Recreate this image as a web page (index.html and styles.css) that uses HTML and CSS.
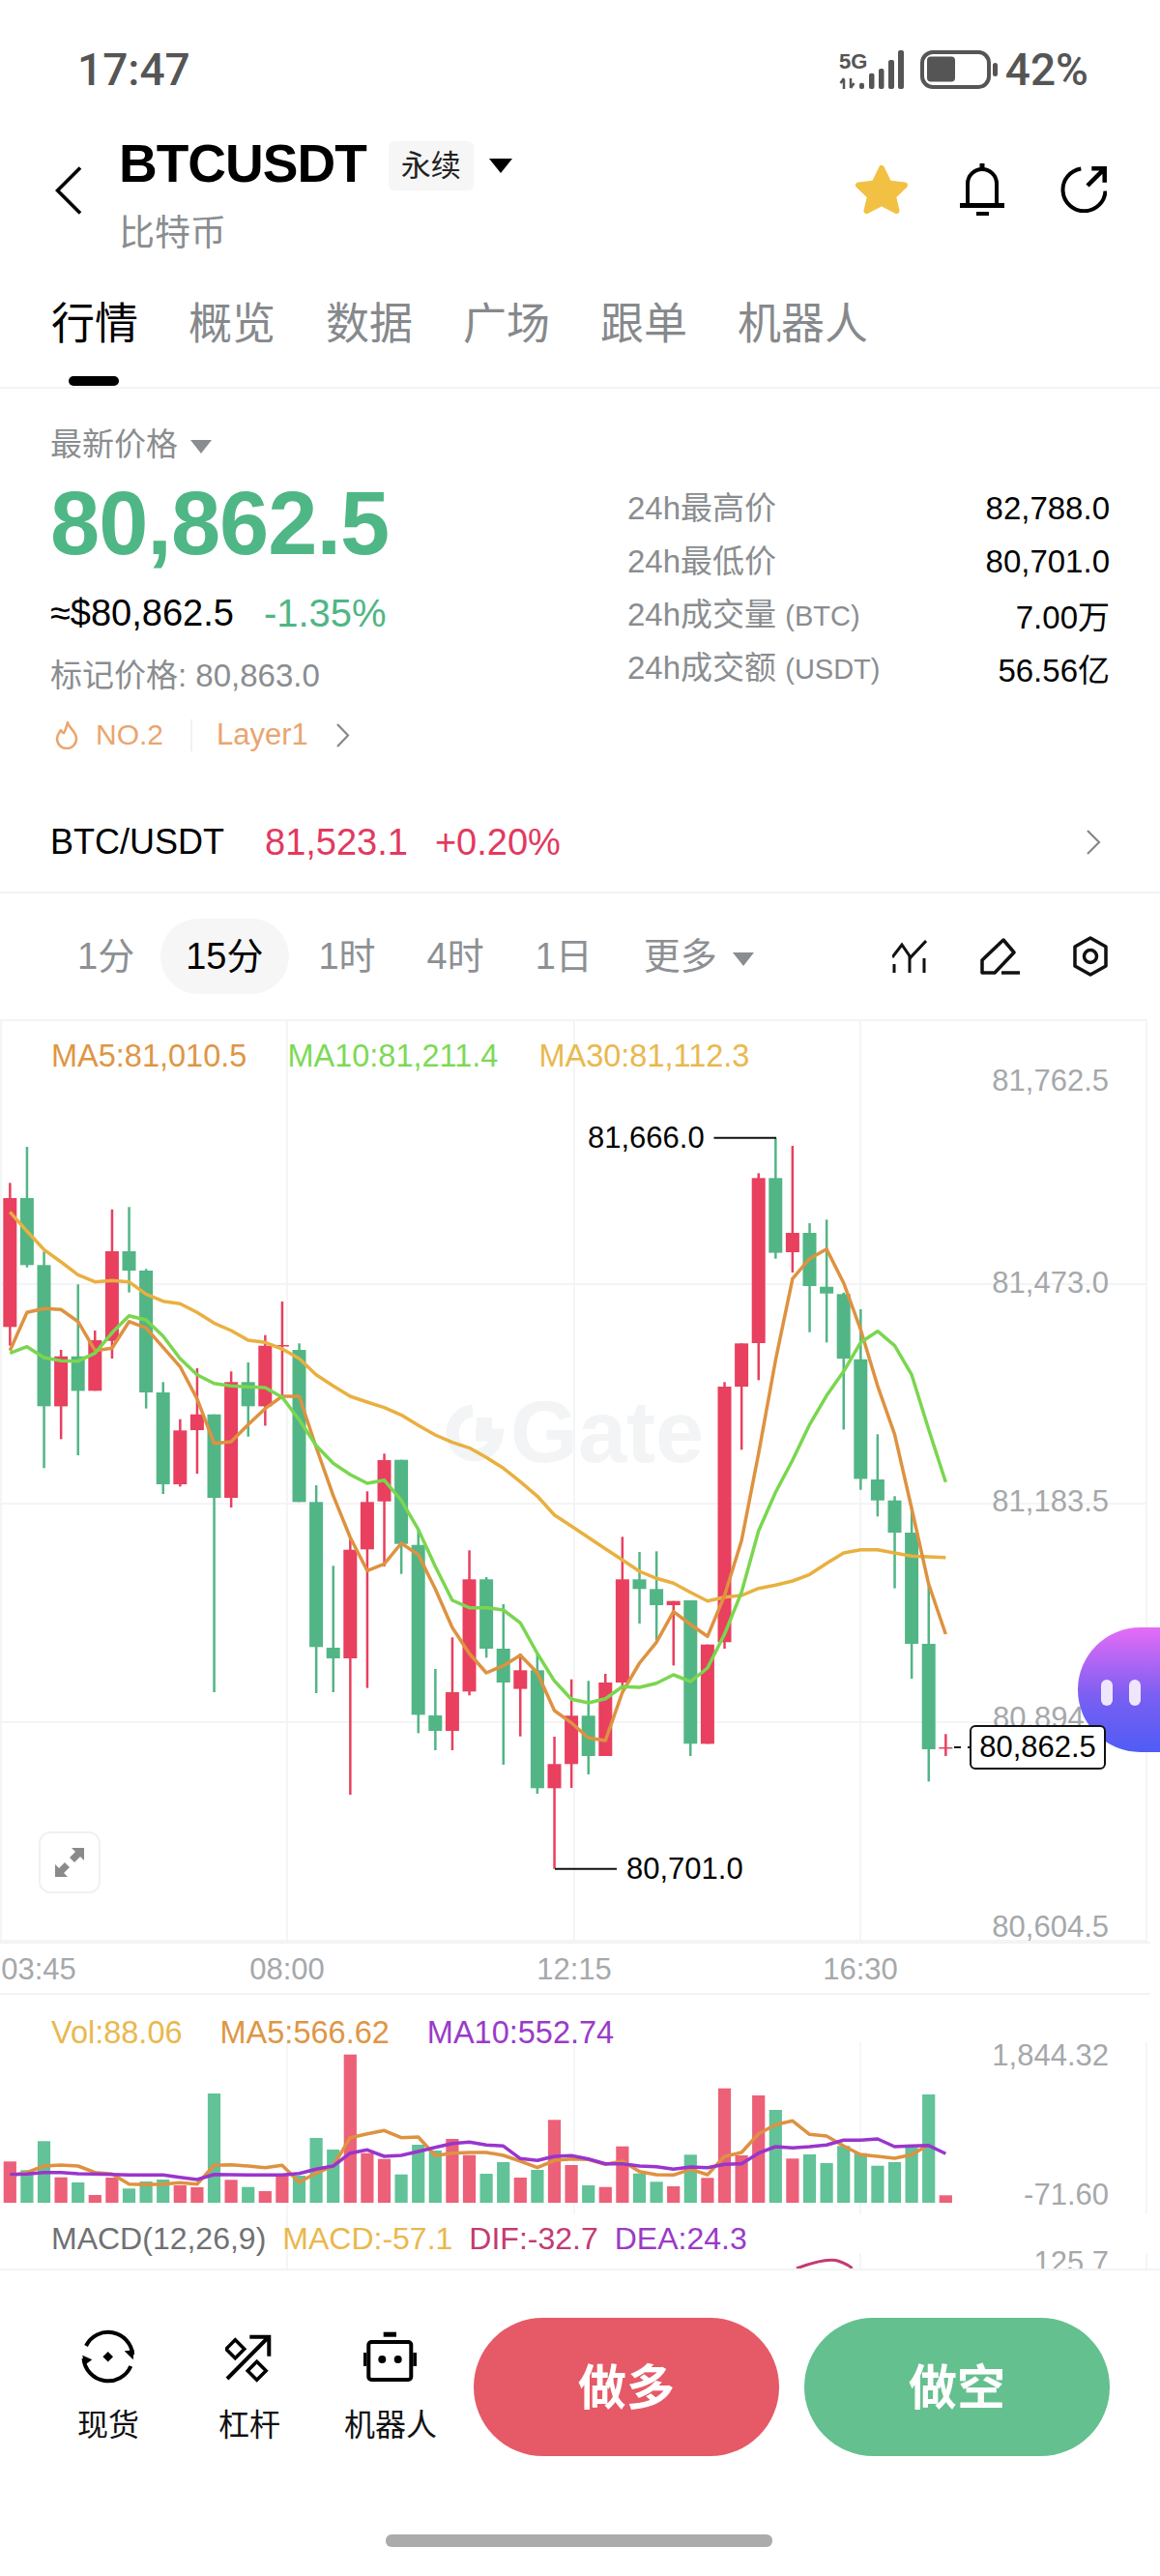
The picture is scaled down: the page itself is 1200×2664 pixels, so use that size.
FILE: index.html
```html
<!DOCTYPE html>
<html lang="zh-CN">
<head>
    <meta charset="UTF-8">
    <meta name="viewport" content="width=device-width, initial-scale=1.0">
    <title>BTCUSDT</title>
    <link rel="stylesheet" href="styles.css">
</head>
<body>
    <div class="status-bar">
        <span class="clock">17:47</span>
        <div class="status-right">
            <svg class="signal" width="67" height="40" viewBox="0 0 67 40">
                <text x="0" y="19" class="signal-text">5G</text>
                <path d="M5 40V30M1.500 34L5 29M12 39V29M12 39l3.500-5" fill="none" stroke="#555" stroke-width="2.500"/>
                <g fill="#555">
                    <rect x="21" y="33.700" width="5" height="6.300" rx="2"/>
                    <rect x="31" y="23.700" width="5.500" height="16.300" rx="2"/>
                    <rect x="41" y="19" width="5.500" height="21" rx="2"/>
                    <rect x="51" y="10" width="6" height="30" rx="2"/>
                    <rect x="61" y="0" width="6" height="40" rx="2"/>
                </g>
            </svg>
            <svg class="battery" width="80" height="40" viewBox="0 0 80 40">
                <rect x="2" y="2" width="69" height="36" rx="11" fill="none" stroke="#555" stroke-width="4"/>
                <rect x="7" y="6.500" width="29" height="26" rx="4" fill="#555"/>
                <rect x="75" y="13" width="5" height="14" rx="2.500" fill="#555"/>
            </svg>
            <span class="percent">42%</span>
        </div>
    </div>

    <div class="header">
        <svg class="back" width="28" height="50" viewBox="0 0 28 50">
            <path d="M26 1.500L2.500 25L26 48.500" fill="none" stroke="#000" stroke-width="3.600"/>
        </svg>
        <div class="title-block">
            <div class="title-row">
                <h1>BTCUSDT</h1>
                <span class="badge">永续</span>
                <span class="caret caret-black"></span>
            </div>
            <p class="subtitle">比特币</p>
        </div>
        <div class="header-icons">
            <svg width="56" height="52" viewBox="0 0 56 52">
                <polygon points="28,4 35.500,19.500 52,21.500 40,33 43.500,48 28,40 12.500,48 16,33 4,21.500 20.500,19.500" fill="#f2c144" stroke="#f2c144" stroke-width="6" stroke-linejoin="round"/>
            </svg>
            <svg width="46" height="54" viewBox="0 0 46 54">
                <path d="M8 43V21a15 15 0 0 1 30 0v22" fill="none" stroke="#000" stroke-width="4"/>
                <path d="M23 0v6" stroke="#000" stroke-width="5"/>
                <path d="M0 43.500h46" stroke="#000" stroke-width="5"/>
                <rect x="17" y="50" width="13" height="4" fill="#000"/>
            </svg>
            <svg class="share-icon" width="48" height="48" viewBox="0 0 48 48">
                <path d="M21.300 2.500A22 22 0 1 0 46.500 25.500" fill="none" stroke="#000" stroke-width="4"/>
                <path d="M28 20L44.700 3.300M32.300 2.300H45.700V16.700" fill="none" stroke="#000" stroke-width="4.500"/>
            </svg>
        </div>
    </div>

    <div class="tabs">
        <span class="tab active">行情</span>
        <span class="tab">概览</span>
        <span class="tab">数据</span>
        <span class="tab">广场</span>
        <span class="tab">跟单</span>
        <span class="tab">机器人</span>
    </div>

    <div class="price-section">
        <div class="price-left">
            <div class="price-label">最新价格 <span class="caret caret-gray"></span></div>
            <div class="last-price">80,862.5</div>
            <div class="fiat-row">
                <span class="fiat">≈$80,862.5</span>
                <span class="change">-1.35%</span>
            </div>
            <div class="mark-price">标记价格: 80,863.0</div>
            <div class="tag-row">
                <svg width="24" height="30" viewBox="0 0 24 30">
                    <path d="M13 2c1 6 9 9 9 17a10 10 0 0 1-20 0c0-4 2-6 4-9 1 2 2 3 3 3 2-3 3-7 4-11z" fill="none" stroke="#e9a56f" stroke-width="2.500" stroke-linejoin="round"/>
                </svg>
                <span class="tag-rank">NO.2</span>
                <span class="tag-sep"></span>
                <span class="tag-name">Layer1</span>
                <svg class="tag-arrow" width="15" height="25" viewBox="0 0 15 25">
                    <path d="M2 1l11 11.500L2 24" fill="none" stroke="#888" stroke-width="2.200"/>
                </svg>
            </div>
        </div>
        <div class="stats">
            <div class="stat"><span class="stat-label">24h最高价</span><span>82,788.0</span></div>
            <div class="stat"><span class="stat-label">24h最低价</span><span>80,701.0</span></div>
            <div class="stat"><span class="stat-label">24h成交量 <small>(BTC)</small></span><span>7.00万</span></div>
            <div class="stat"><span class="stat-label">24h成交额 <small>(USDT)</small></span><span>56.56亿</span></div>
        </div>
    </div>

    <div class="spot-row">
        <span class="spot-name">BTC/USDT</span>
        <span class="spot-price">81,523.1</span>
        <span class="spot-price">+0.20%</span>
        <svg class="spot-arrow" width="16" height="26" viewBox="0 0 16 26">
            <path d="M2 1l12 12L2 25" fill="none" stroke="#888" stroke-width="2.200"/>
        </svg>
    </div>

    <div class="interval-row">
        <span class="interval">1分</span>
        <span class="interval active">15分</span>
        <span class="interval">1时</span>
        <span class="interval">4时</span>
        <span class="interval">1日</span>
        <span class="interval">更多 <span class="caret caret-gray"></span></span>
        <div class="interval-icons">
            <svg width="36" height="34" viewBox="0 0 36 34">
                <path d="M0 18L10 5l9 13L35 1" fill="none" stroke="#111" stroke-width="3"/>
                <path d="M2 25v9M18 17v17M33 19v15" stroke="#111" stroke-width="3"/>
            </svg>
            <svg width="41" height="38" viewBox="0 0 41 38">
                <path d="M24 2l11 13-20 21H2V23z" fill="none" stroke="#111" stroke-width="3.500" stroke-linejoin="round"/>
                <path d="M22 36h19" stroke="#111" stroke-width="3.500"/>
            </svg>
            <svg width="36" height="42" viewBox="0 0 36 42">
                <path d="M18 2l16 9v20l-16 9-16-9V11z" fill="none" stroke="#111" stroke-width="3.500" stroke-linejoin="round"/>
                <circle cx="18" cy="21" r="6.500" fill="none" stroke="#111" stroke-width="3.500"/>
            </svg>
        </div>
    </div>

    <div class="chart-pane kline-pane">
        <div class="watermark">
            <svg width="64" height="60" viewBox="0 0 64 60">
                <path d="M30 7A23 23 0 1 0 55 32H33" fill="none" stroke="#f2f4f5" stroke-width="13"/>
                <rect x="34" y="14" width="16" height="16" fill="#f2f4f5"/>
            </svg>
            <span>Gate</span>
        </div>
        <svg id="klineChart" class="chart-svg" width="1200" height="954"></svg>
        <div class="legend">
            <span class="c-ma5">MA5:81,010.5</span>
            <span class="c-ma10">MA10:81,211.4</span>
            <span class="c-ma30">MA30:81,112.3</span>
        </div>
        <span class="axis-label k1">81,762.5</span>
        <span class="axis-label k2">81,473.0</span>
        <span class="axis-label k3">81,183.5</span>
        <span class="axis-label k4">80,894</span>
        <span class="axis-label k5">80,604.5</span>
        <span class="mark mark-high">81,666.0</span>
        <span class="mark mark-low">80,701.0</span>
        <div class="expand-btn">
            <svg width="30" height="30" viewBox="0 0 30 30">
                <path d="M30 0v13l-4-4-6 6-5-5 6-6-4-4zM0 30V17l4 4 6-6 5 5-6 6 4 4z" fill="#8a8a8a"/>
            </svg>
        </div>
        <div class="bot-bubble"><i></i><i></i></div>
        <div class="price-tag">80,862.5</div>
    </div>

    <div class="time-axis">
        <span class="tick t1">03:45</span>
        <span class="tick t2">08:00</span>
        <span class="tick t3">12:15</span>
        <span class="tick t4">16:30</span>
    </div>

    <div class="chart-pane vol-pane">
        <svg id="volChart" class="chart-svg" width="1200" height="227"></svg>
        <div class="legend">
            <span class="c-ma30">Vol:88.06</span>
            <span class="c-ma5">MA5:566.62</span>
            <span class="c-purple">MA10:552.74</span>
        </div>
        <span class="axis-label v1">1,844.32</span>
        <span class="axis-label v2">-71.60</span>
    </div>

    <div class="chart-pane macd-pane">
        <svg class="chart-svg" width="1200" height="56">
            <path d="M297 0V56M890 40V56M1186 40V56" stroke="#f4f5f6" stroke-width="2"/>
            <path d="M824 56Q856 44 868 48.500T881 56" fill="none" stroke="#c43a73" stroke-width="3"/>
        </svg>
        <div class="legend">
            <span class="c-gray">MACD(12,26,9)</span>
            <span class="c-ma30">MACD:-57.1</span>
            <span class="c-dif">DIF:-32.7</span>
            <span class="c-purple">DEA:24.3</span>
        </div>
        <span class="axis-label m1">125.7</span>
    </div>

    <div class="bottom-bar">
        <div class="actions">
            <div class="tool">
                <svg width="56" height="56" viewBox="0 0 56 56">
                    <path d="M5 17A25.500 25.500 0 0 1 53.200 26M51.300 38A25.500 25.500 0 0 1 2.500 30" fill="none" stroke="#000" stroke-width="4"/>
                    <path d="M44.700 22.300L54.700 21.300L53.700 31.300zM1.300 26.700L11.300 31.300L3 37.300z" fill="#000"/>
                    <path d="M27.700 23l5.300 5.300-5.300 5.300-5.300-5.300z" fill="#000"/>
                </svg>
                <span>现货</span>
            </div>
            <div class="tool">
                <svg width="50" height="56" viewBox="0 0 50 56">
                    <path d="M2 51L43.700 9M25.300 7.700H45.300V27.700" fill="none" stroke="#000" stroke-width="4"/>
                    <path d="M10.300 10.800l9.500 9.500-9.500 9.500-9.500-9.500zM32.700 33.200l9.500 9.500-9.500 9.500-9.500-9.500z" fill="none" stroke="#000" stroke-width="3.500"/>
                </svg>
                <span>杠杆</span>
            </div>
            <div class="tool">
                <svg width="56" height="56" viewBox="0 0 56 56">
                    <rect x="20.700" y="2.700" width="13.300" height="5" fill="#000"/>
                    <rect x="5.300" y="13" width="44" height="39" rx="3" fill="none" stroke="#000" stroke-width="4"/>
                    <path d="M0 24h3.300v14H0zM51.300 24H55v14h-3.700z" fill="#000"/>
                    <circle cx="19.300" cy="31" r="4" fill="#000"/>
                    <circle cx="35.700" cy="31" r="4" fill="#000"/>
                </svg>
                <span>机器人</span>
            </div>
        </div>
        <button class="trade-btn long">做多</button>
        <button class="trade-btn short">做空</button>
    </div>
    <div class="home-indicator"></div>

    <script src="chart.js"></script>
</body>
</html>
```

FILE: styles.css
```css
* {
    margin: 0;
    padding: 0;
    box-sizing: border-box;
}

body {
    font-family: 'Liberation Sans', 'Noto Sans CJK SC', sans-serif;
    background: white;
    width: 1200px;
    height: 2664px;
    overflow: hidden;
    color: #000;
}

.caret {
    display: inline-block;
    width: 0;
    height: 0;
    border-left: 11px solid transparent;
    border-right: 11px solid transparent;
}

.caret-black {
    border-top: 15px solid #000;
    border-left-width: 12px;
    border-right-width: 12px;
}

.caret-gray {
    border-top: 14px solid #8a8d90;
    vertical-align: middle;
}

/* status bar */
.status-bar {
    height: 112px;
    padding: 32px 74px 0 80px;
    display: flex;
    justify-content: space-between;
    align-items: center;
    color: #555;
}

.clock,
.percent {
    font-family: Roboto, sans-serif;
    font-size: 46px;
    font-weight: 500;
}

.status-right {
    display: flex;
    align-items: center;
}

.signal {
    margin-right: 17px;
}

.signal-text {
    font-family: 'Liberation Sans', sans-serif;
    font-size: 22px;
    font-weight: bold;
    fill: #555;
}

.battery {
    margin-right: 8px;
}

/* header */
.header {
    height: 168px;
    padding: 0 55px 0 57px;
    display: flex;
    align-items: flex-start;
}

.back {
    margin-top: 60px;
    margin-right: 38px;
}

.title-block {
    padding-top: 34px;
}

.title-row {
    display: flex;
    align-items: center;
    height: 51px;
}

.title-row h1 {
    font-size: 55px;
    font-weight: bold;
    letter-spacing: -1px;
    margin-right: 23px;
    margin-top: -6px;
}

.badge {
    background: #f6f6f6;
    border-radius: 6px;
    width: 88px;
    height: 51px;
    line-height: 51px;
    text-align: center;
    font-size: 31px;
    color: #222;
    margin-right: 16px;
}

.subtitle {
    margin-top: 25px;
    font-size: 37px;
    line-height: 40px;
    color: #8a8d90;
}

.header-icons {
    margin-left: auto;
    margin-top: 57px;
    display: flex;
    align-items: center;
    gap: 53px;
}

.share-icon {
    margin-left: 5px;
}

/* tabs */
.tabs {
    height: 122px;
    padding: 28px 0 0 53px;
    display: flex;
    gap: 52px;
    border-bottom: 2px solid #f2f3f4;
}

.tab {
    position: relative;
    height: 56px;
    font-size: 45px;
    line-height: 56px;
    color: #86898c;
}

.tab.active {
    color: #000;
}

.tab.active::after {
    content: '';
    position: absolute;
    left: 18px;
    top: 81px;
    width: 52px;
    height: 10px;
    background: #000;
    border-radius: 5px;
}

/* price block */
.price-section {
    height: 418px;
    padding: 38px 52px 0;
    display: flex;
}

.price-left {
    flex: 1;
}

.price-label {
    font-size: 33px;
    line-height: 40px;
    color: #8a8d90;
}

.price-label .caret {
    margin-left: 4px;
}

.last-price {
    margin-top: 11px;
    font-size: 92px;
    font-weight: bold;
    line-height: 100px;
    letter-spacing: -1px;
    color: #4fb685;
}

.fiat-row {
    margin-top: 23px;
    line-height: 40px;
    font-size: 38px;
    display: flex;
    gap: 31px;
}

.change {
    font-size: 40px;
    color: #4fb685;
}

.mark-price {
    margin-top: 25px;
    font-size: 33px;
    line-height: 40px;
    color: #8a8d90;
}

.tag-row {
    margin-top: 21px;
    height: 40px;
    display: flex;
    align-items: center;
    color: #e9a56f;
    padding-left: 5px;
}

.tag-rank {
    margin-left: 18px;
    font-size: 30px;
}

.tag-sep {
    width: 2px;
    height: 33px;
    background: #f3f1ef;
    margin: 0 25px 0 28px;
}

.tag-name {
    font-size: 31px;
}

.tag-arrow {
    margin-left: 28px;
}

.stats {
    width: 499px;
    margin-top: 58px;
}

.stat {
    height: 55px;
    display: flex;
    justify-content: space-between;
    align-items: center;
    font-size: 33px;
}

.stat-label {
    color: #8a8d90;
    margin-bottom: 5px;
}

.stat-label small {
    font-size: 29px;
}

/* spot price row */
.spot-row {
    height: 104px;
    padding: 0 61px 0 52px;
    display: flex;
    align-items: center;
    gap: 28px;
    border-bottom: 2px solid #f2f3f4;
    font-size: 38px;
}

.spot-name {
    font-size: 36px;
    margin-right: 14px;
}

.spot-price {
    color: #e2395f;
}

.spot-arrow {
    margin-left: auto;
}

/* interval selector */
.interval-row {
    height: 130px;
    padding: 0 54px 0 53.500px;
    display: flex;
    align-items: center;
}

.interval {
    height: 78px;
    line-height: 78px;
    padding: 0 26.500px;
    font-size: 38px;
    color: #8d9093;
    white-space: nowrap;
}

.interval .caret {
    margin-left: 6px;
}

.interval.active {
    background: #f6f6f6;
    border-radius: 39px;
    color: #000;
    margin-right: 4px;
}

.interval-icons {
    margin-left: auto;
    display: flex;
    align-items: center;
    gap: 55px;
}

/* chart panes */
.chart-pane {
    position: relative;
    width: 1200px;
}

.chart-svg {
    position: absolute;
    left: 0;
    top: 0;
}

.kline-pane {
    height: 954px;
}

.vol-pane {
    height: 227px;
}

.macd-pane {
    height: 56px;
    overflow: hidden;
}

.legend {
    position: absolute;
    left: 53px;
    top: 18px;
    display: flex;
    gap: 42px;
    font-size: 32.500px;
    line-height: 40px;
    white-space: nowrap;
}

.vol-pane .legend {
    top: 19px;
    gap: 39px;
}

.macd-pane .legend {
    top: 5px;
    gap: 17px;
    font-size: 32px;
}

.c-ma5 { color: #de9645; }
.c-ma10 { color: #7dd957; }
.c-ma30 { color: #e9b84e; }
.c-purple { color: #9a3bc8; }
.c-dif { color: #c43a73; }
.c-gray { color: #6f7174; }

.axis-label {
    position: absolute;
    right: 53px;
    font-size: 31px;
    line-height: 40px;
    color: #a5a8ab;
}

.k1 { top: 44px; }
.k2 { top: 253px; }
.k3 { top: 479px; }
.k4 { top: 703px; right: auto; left: 1027px; }
.k5 { top: 919px; }
.v1 { top: 43px; }
.v2 { top: 187px; }
.m1 { top: 30px; }

.mark {
    position: absolute;
    font-size: 31px;
    line-height: 40px;
}

.mark-high { left: 608px; top: 103px; }
.mark-low { left: 648px; top: 859px; }

.watermark {
    position: absolute;
    left: 459px;
    top: 376px;
    display: flex;
    align-items: center;
    gap: 5px;
    font-size: 90px;
    font-weight: bold;
    color: #f2f4f5;
}

.expand-btn {
    position: absolute;
    left: 40px;
    top: 840px;
    width: 64px;
    height: 64px;
    border: 2px solid #f0f1f2;
    border-radius: 12px;
    display: flex;
    align-items: center;
    justify-content: center;
    background: white;
}

.bot-bubble {
    position: absolute;
    left: 1115px;
    top: 629px;
    width: 85px;
    height: 129px;
    border-radius: 65px 0 0 65px;
    background: linear-gradient(to bottom, #e56cf6, #7a5ff2 55%, #4f5cf6);
    display: flex;
    align-items: center;
    gap: 17px;
    padding-left: 24px;
}

.bot-bubble i {
    width: 12px;
    height: 27px;
    margin-top: 6px;
    border-radius: 6px;
    background: #efe6fd;
}

.price-tag {
    position: absolute;
    left: 1003px;
    top: 730px;
    width: 141px;
    height: 46px;
    border: 2px solid #111;
    border-radius: 6px;
    background: white;
    font-size: 31px;
    line-height: 42px;
    text-align: center;
}

.time-axis {
    position: relative;
    height: 55px;
    width: 1190px;
    border-top: 2px solid #f2f3f4;
    border-bottom: 2px solid #f2f3f4;
    font-size: 31px;
    color: #a5a8ab;
}

.tick {
    position: absolute;
    top: 7px;
    line-height: 40px;
    transform: translateX(-50%);
}

.t1 { left: 40px; }
.t2 { left: 297px; }
.t3 { left: 594px; }
.t4 { left: 890px; }

/* bottom actions */
.bottom-bar {
    height: 252px;
    padding: 49px 52px 0 39px;
    display: flex;
    border-top: 2px solid #f2f3f4;
    background: white;
    position: relative;
}

.actions {
    display: flex;
    width: 451px;
    padding-right: 13px;
}

.tool {
    width: 146px;
    display: flex;
    flex-direction: column;
    align-items: center;
    padding-top: 12px;
    font-size: 32px;
    color: #111;
}

.tool span {
    margin-top: 17px;
}

.trade-btn {
    width: 316px;
    height: 143px;
    padding-bottom: 8px;
    border: none;
    border-radius: 72px;
    color: white;
    font-family: inherit;
    font-size: 50px;
    font-weight: bold;
}

.long { background: #e55a66; }
.short { background: #64c08e; margin-left: 26px; }

.home-indicator {
    width: 400px;
    height: 13px;
    margin: 23px 0 0 399px;
    border-radius: 6px;
    background: #ababab;
}
```

FILE: chart.js
```js
// chart values are traced in thirds of a pixel, x comes from the bar index
const STEP = 17.6;
const barX = i => 10.3 + STEP * i;
const RED = '#e8405e';
const GREEN = '#52b585';
const VOL_RED = '#ec6078';
const VOL_GREEN = '#62c298';

// high, body top, body bottom, low, colour
const candles = [
    [490, 537, 937, 995, 'r'], [378, 537, 745, 752, 'g'], [703, 745, 1183, 1375, 'g'],
    [1008, 1028, 1183, 1285, 'r'], [805, 1028, 1135, 1335, 'g'], [948, 978, 1135, 1135, 'r'],
    [572, 702, 980, 1035, 'r'], [565, 702, 762, 830, 'g'], [757, 762, 1140, 1190, 'g'],
    [1108, 1140, 1425, 1455, 'g'], [1223, 1258, 1425, 1432, 'r'], [1065, 1208, 1257, 1392, 'r'],
    [1208, 1208, 1467, 2070, 'g'], [1075, 1108, 1467, 1497, 'r'], [1047, 1108, 1183, 1277, 'g'],
    [962, 995, 1183, 1243, 'r'], [858, 993, 997, 1150, 'r'], [988, 1008, 1480, 1480, 'g'],
    [1428, 1480, 1930, 2073, 'g'], [1678, 1932, 1965, 2070, 'g'], [1590, 1628, 1965, 2388, 'r'],
    [1447, 1480, 1627, 2057, 'r'], [1330, 1350, 1478, 1680, 'r'], [1349, 1349, 1610, 1703, 'g'],
    [1565, 1613, 2140, 2197, 'g'], [1998, 2142, 2190, 2250, 'g'], [1900, 2070, 2190, 2250, 'r'],
    [1630, 1720, 2068, 2080, 'r'], [1713, 1720, 1935, 1963, 'g'], [1797, 1935, 2040, 2295, 'g'],
    [1950, 2002, 2060, 2207, 'r'], [1950, 2002, 2368, 2385, 'g'], [2208, 2293, 2368, 2618, 'r'],
    [2030, 2143, 2293, 2367, 'r'], [2035, 2143, 2268, 2325, 'g'], [2013, 2040, 2268, 2268, 'r'],
    [1588, 1720, 2040, 2060, 'r'], [1635, 1720, 1750, 1857, 'g'], [1633, 1750, 1800, 1910, 'g'],
    [1787, 1787, 1800, 1987, 'r'], [1785, 1785, 2230, 2268, 'g'], [1922, 1922, 2230, 2230, 'r'],
    [1108, 1122, 1915, 1935, 'r'], [988, 988, 1122, 1318, 'r'], [460, 475, 987, 1102, 'r'],
    [350, 475, 707, 725, 'g'], [375, 645, 705, 768, 'r'], [615, 645, 810, 953, 'g'],
    [604, 812, 833, 985, 'g'], [830, 835, 1035, 1255, 'g'], [882, 1037, 1408, 1442, 'g'],
    [1270, 1410, 1475, 1525, 'g'], [1462, 1475, 1575, 1748, 'g'], [1500, 1575, 1920, 2028, 'g'],
    [1730, 1920, 2247, 2347, 'g'], [2200, 2241, 2245, 2268, 'r']
];

const ma5 = [1010, 892, 880, 883, 920, 1010, 1003, 920, 940, 1000, 1060, 1160, 1298, 1293, 1240, 1190,
    1152, 1152, 1310, 1460, 1590, 1693, 1672, 1608, 1643, 1750, 1870, 1950, 2010, 1988, 1955, 2010, 2127,
    2165, 2212, 2220, 2070, 1980, 1915, 1820, 1860, 1897, 1770, 1600, 1330, 1040, 787, 725, 695, 800, 945,
    1120, 1270, 1500, 1735, 1890];
const ma10 = [1018, 998, 1032, 1042, 1043, 1018, 955, 902, 915, 965, 1035, 1085, 1112, 1120, 1123, 1125,
    1155, 1225, 1305, 1360, 1395, 1422, 1412, 1475, 1565, 1680, 1785, 1808, 1808, 1815, 1855, 1950, 2035,
    2092, 2103, 2090, 2053, 2055, 2042, 2016, 2037, 1995, 1890, 1760, 1570, 1450, 1350, 1240, 1150, 1075,
    985, 950, 995, 1085, 1255, 1418];
const ma30 = [580, 640, 697, 735, 775, 797, 793, 797, 835, 857, 865, 892, 925, 948, 978, 985, 1005, 1035,
    1085, 1120, 1152, 1170, 1187, 1210, 1242, 1272, 1295, 1312, 1342, 1375, 1417, 1462, 1520, 1555, 1590,
    1625, 1660, 1695, 1717, 1732, 1760, 1787, 1775, 1770, 1748, 1738, 1725, 1705, 1670, 1638, 1628, 1628,
    1638, 1648, 1650, 1652];

const volumes = [[1126, 'r'], [1153, 'g'], [1063, 'g'], [1175, 'r'], [1191, 'g'], [1230, 'r'], [1176, 'r'],
    [1210, 'g'], [1188, 'g'], [1182, 'g'], [1200, 'r'], [1206, 'r'], [915, 'g'], [1183, 'r'], [1205, 'g'],
    [1218, 'r'], [1165, 'r'], [1170, 'g'], [1053, 'g'], [1089, 'g'], [794, 'r'], [1100, 'r'], [1118, 'r'],
    [1166, 'g'], [1074, 'g'], [1092, 'g'], [1056, 'r'], [1106, 'r'], [1164, 'g'], [1128, 'g'], [1176, 'r'],
    [1152, 'g'], [997, 'r'], [1137, 'r'], [1200, 'g'], [1205, 'r'], [1079, 'r'], [1163, 'g'], [1189, 'g'],
    [1203, 'r'], [1105, 'g'], [1177, 'r'], [899, 'r'], [1107, 'r'], [921, 'r'], [966, 'g'], [1117, 'r'],
    [1104, 'g'], [1131, 'g'], [1078, 'g'], [1100, 'g'], [1139, 'g'], [1128, 'g'], [1083, 'g'], [918, 'g'],
    [1231, 'r']];

const volMa5 = [1170, 1160, 1140, 1137, 1140, 1160, 1165, 1196, 1198, 1196, 1192, 1196, 1138, 1136, 1140,
    1145, 1138, 1190, 1162, 1140, 1052, 1040, 1030, 1052, 1050, 1108, 1100, 1098, 1098, 1107, 1125, 1145,
    1123, 1118, 1120, 1135, 1125, 1157, 1167, 1168, 1150, 1167, 1110, 1098, 1040, 1012, 1000, 1042, 1047,
    1078, 1105, 1110, 1116, 1105, 1075];
const volMa10 = [1166, 1165, 1160, 1160, 1164, 1165, 1166, 1168, 1168, 1168, 1175, 1182, 1166, 1167, 1168,
    1168, 1168, 1163, 1150, 1140, 1100, 1090, 1110, 1107, 1095, 1082, 1070, 1066, 1075, 1078, 1117, 1123,
    1110, 1108, 1118, 1133, 1133, 1140, 1142, 1150, 1143, 1145, 1135, 1133, 1100, 1080, 1084, 1080, 1075,
    1060, 1060, 1056, 1080, 1078, 1076, 1102];

function maLine(values, toY, colour, width) {
    const points = values.map((v, i) => barX(i).toFixed(1) + ',' + toY(v).toFixed(1)).join(' ');
    return `<polyline points="${points}" fill="none" stroke="${colour}" stroke-width="${width}" stroke-linejoin="round"/>`;
}

function drawKline() {
    const toY = v => v / 3 + 6;
    let out = '';

    // frame and grid
    [1, 297, 594, 890, 1186].forEach(x => {
        out += `<line x1="${x}" y1="0" x2="${x}" y2="954" stroke="#f4f5f6" stroke-width="2"/>`;
    });
    [1, 274, 501, 727, 953].forEach(y => {
        out += `<line x1="0" y1="${y}" x2="1186" y2="${y}" stroke="#f3f4f5" stroke-width="2"/>`;
    });

    candles.forEach((c, i) => {
        const x = barX(i);
        const colour = c[4] === 'r' ? RED : GREEN;
        out += `<rect x="${(x - 1.25).toFixed(1)}" y="${toY(c[0]).toFixed(1)}" width="2.500" height="${((c[3] - c[0]) / 3).toFixed(1)}" fill="${colour}"/>`;
        out += `<rect x="${(x - 7).toFixed(1)}" y="${toY(c[1]).toFixed(1)}" width="14" height="${Math.max(1.5, (c[2] - c[1]) / 3).toFixed(1)}" fill="${colour}"/>`;
    });

    out += maLine(ma30, toY, '#e9b040', 3.5);
    out += maLine(ma5, toY, '#de9240', 3.5);
    out += maLine(ma10, toY, '#7ad64f', 3.5);

    // high / low callouts and the stub of the last price line
    out += '<path d="M738.500 122.700H803M574 878.700H638M987 753H994M1001 753H1003" stroke="#111" stroke-width="2" fill="none"/>';

    document.getElementById('klineChart').innerHTML = out;
}

function drawVolume() {
    const toY = v => v / 3 - 203;
    let out = '<path d="M297 49V227M594 49V227M890 49V227M1186 49V227" stroke="#f5f6f7" stroke-width="2"/>';

    volumes.forEach((b, i) => {
        const colour = b[1] === 'r' ? VOL_RED : VOL_GREEN;
        const top = toY(b[0]);
        out += `<rect x="${(barX(i) - 6.6).toFixed(1)}" y="${top.toFixed(1)}" width="13.200" height="${(215 - top).toFixed(1)}" fill="${colour}"/>`;
    });

    out += maLine(volMa5, toY, '#de9240', 3.5);
    out += maLine(volMa10, toY, '#9a35cc', 3.5);

    document.getElementById('volChart').innerHTML = out;
}

drawKline();
drawVolume();
```
